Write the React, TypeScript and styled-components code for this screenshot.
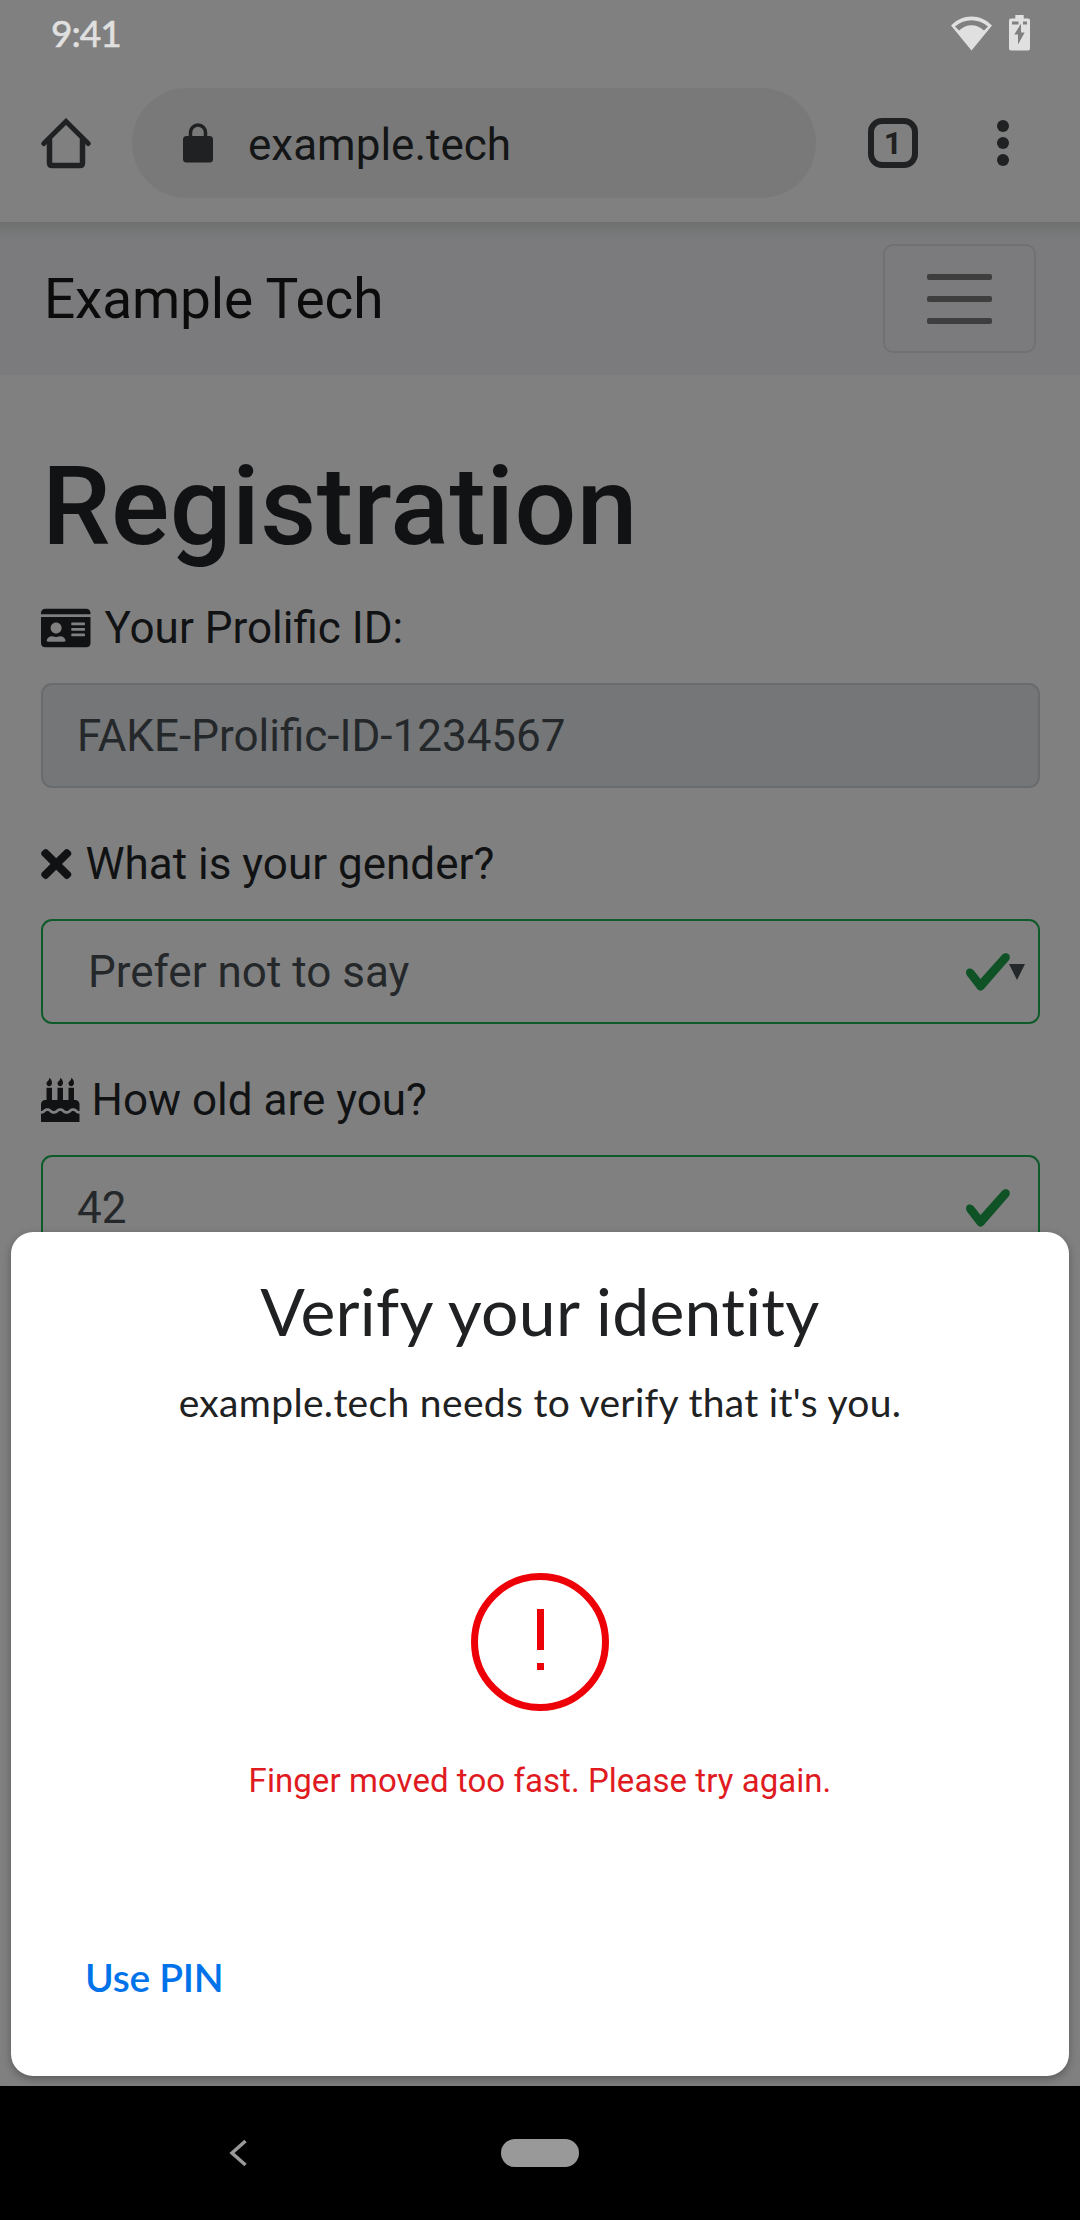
import React from "react";
import styled, { createGlobalStyle } from "styled-components";
import { FaIdCard, FaTimes, FaBirthdayCake } from "react-icons/fa";

const roboto = `Roboto, "Liberation Sans", sans-serif`;
const display = `Lato, "Open Sans", sans-serif`;

const GlobalStyle = createGlobalStyle`
  *, *::before, *::after { box-sizing: border-box; }
  html, body { margin: 0; background: #808080; }
  h1, h2, p { margin: 0; font-weight: 400; }
  button { font: inherit; margin: 0; padding: 0; border: 0; background: none; color: inherit; }
  svg { display: block; flex: none; }
`;

const Screen = styled.div`
  position: relative;
  width: 1080px;
  height: 2220px;
  display: flex;
  flex-direction: column;
  overflow: hidden;
  background: #808080;
  font-family: ${roboto};
  color: #111213;
`;

const StatusBar = styled.div`
  display: flex;
  justify-content: space-between;
  align-items: center;
  height: 64px;
  padding: 2px 50px 0 51px;
  color: #e0e0e0;
`;

const Clock = styled.span`
  font-family: ${display};
  font-size: 37px;
  line-height: 44px;
  letter-spacing: -1px;
  -webkit-text-stroke: 0.6px currentColor;
  white-space: nowrap;
`;

const StatusIcons = styled.div`
  display: flex;
  align-items: center;
  gap: 17px;
`;

const BrowserBar = styled.header`
  display: flex;
  align-items: center;
  height: 158px;
  padding: 0 71px 0 41px;
  color: #1f2122;
`;

const AddressBar = styled.div`
  display: flex;
  align-items: center;
  width: 684px;
  height: 110px;
  margin: 0 52px 0 41px;
  padding-left: 51px;
  border-radius: 55px;
  background: #797979;
`;

const Address = styled.span`
  margin-left: 35px;
  padding-top: 3px;
  font-size: 44px;
  line-height: 52px;
  color: #141516;
  white-space: nowrap;
`;

const TabCount = styled.div`
  display: flex;
  align-items: center;
  justify-content: center;
  width: 50px;
  height: 50px;
  margin-right: 79px;
  border: 6px solid #1f2122;
  border-radius: 14px;
  font-size: 32px;
  line-height: 38px;
  font-weight: 700;
`;

const Dots = styled.button`
  display: flex;
  flex-direction: column;
  gap: 5px;
`;

const Dot = styled.span`
  width: 12px;
  height: 12px;
  border-radius: 50%;
  background: #1f2122;
`;

const SiteNav = styled.nav`
  display: flex;
  align-items: center;
  justify-content: space-between;
  height: 153px;
  padding: 0 44px;
  background: linear-gradient(#6e7070 0, #737575 6px, #757777 10px, #7b7b7d 16px);
`;

const Brand = styled.span`
  font-size: 55px;
  line-height: 66px;
  letter-spacing: -0.15px;
  color: #0b0b0b;
  white-space: nowrap;
`;

const Toggler = styled.button`
  display: flex;
  flex-direction: column;
  align-items: center;
  justify-content: center;
  gap: 16px;
  width: 153px;
  height: 109px;
  border: 2px solid #717173;
  border-radius: 10px;
`;

const TogglerLine = styled.span`
  width: 65px;
  height: 6px;
  border-radius: 2px;
  background: #3e3e3f;
`;

const Page = styled.main`
  flex: 1;
  padding: 66px 40px 0 41px;
`;

const Heading = styled.h1`
  margin: 0 0 22px 1px;
  font-size: 109px;
  line-height: 132px;
  font-weight: 500;
  letter-spacing: 0.4px;
  white-space: nowrap;
`;

const Field = styled.div`
  margin-bottom: 43px;
`;

const FieldLabel = styled.label<{ $iconWidth: number; $gap: number }>`
  display: flex;
  align-items: center;
  gap: ${(p) => p.$gap}px;
  margin-bottom: 22px;
  height: 66px;
  font-size: 44px;
  line-height: 66px;
  white-space: nowrap;

  svg {
    width: ${(p) => p.$iconWidth}px;
    height: 44px;
  }
`;

const Control = styled.div<{ $border: string; $fill?: string; $indent?: number }>`
  display: flex;
  align-items: center;
  height: 105px;
  padding: 0 10px 0 ${(p) => p.$indent ?? 34}px;
  border: 2px solid ${(p) => p.$border};
  border-radius: 11px;
  background: ${(p) => p.$fill ?? "transparent"};
  color: #25282b;
  font-size: 44px;
  line-height: 52px;
  white-space: nowrap;
`;

const Trailing = styled.div<{ $end: number }>`
  display: flex;
  align-items: center;
  margin-left: auto;
  margin-right: ${(p) => p.$end}px;
`;

const Sheet = styled.section`
  position: absolute;
  left: 11px;
  right: 11px;
  top: 1232px;
  height: 844px;
  display: flex;
  flex-direction: column;
  align-items: center;
  padding-top: 40px;
  border-radius: 22px;
  background: #fff;
  box-shadow: 0 3px 8px rgba(0, 0, 0, 0.3);
  color: #202122;
`;

const Title = styled.h2`
  font-family: ${display};
  font-size: 66px;
  line-height: 78px;
  letter-spacing: 0.3px;
  font-variant-ligatures: none;
  white-space: nowrap;
`;

const Subtitle = styled.p`
  margin-top: 26px;
  font-family: ${display};
  font-size: 39px;
  line-height: 52px;
  letter-spacing: 0.33px;
  font-variant-ligatures: none;
  white-space: nowrap;
`;

const ErrorRing = styled.div`
  display: flex;
  flex-direction: column;
  align-items: center;
  justify-content: center;
  gap: 13px;
  width: 138px;
  height: 138px;
  margin-top: 145px;
  padding-bottom: 6px;
  border: 7px solid #ee0008;
  border-radius: 50%;
`;

const Mark = styled.span<{ $height: number }>`
  width: 7px;
  height: ${(p) => p.$height}px;
  background: #ee0008;
`;

const ErrorText = styled.p`
  margin-top: 50px;
  font-size: 33px;
  line-height: 40px;
  letter-spacing: 0.06px;
  color: #e01b1f;
  white-space: nowrap;
`;

const PinButton = styled.button`
  align-self: flex-start;
  margin: 151px 0 0 74px;
  font-family: ${display};
  font-size: 39px;
  line-height: 50px;
  font-weight: 600;
  letter-spacing: -0.3px;
  color: #0073ea;
  white-space: nowrap;
`;

const SystemNav = styled.footer`
  display: grid;
  grid-template-columns: 1fr 78px 1fr;
  align-items: center;
  height: 134px;
  background: #000;
`;

const Back = styled.button`
  justify-self: start;
  margin-left: 229px;
`;

const HomePill = styled.button`
  width: 78px;
  height: 28px;
  border-radius: 14px;
  background: #999;
`;

const WifiIcon = () => (
  <svg width="41" height="35" viewBox="0 0 41 35">
    <path
      fillRule="evenodd"
      fill="#e0e0e0"
      d="M20.500 34.500 0 9.500C6 3.500 13 .5 20.500.5S35 3.500 41 9.500ZM4 10.500 8 14.500C12 11 16 9.300 20.500 9.300S29 11 33 14.500L37 10.500C32 6.300 26.500 4.200 20.500 4.200S9 6.300 4 10.500Z"
    />
  </svg>
);

const BatteryIcon = () => (
  <svg width="21" height="36" viewBox="0 0 21 36">
    <path
      fillRule="evenodd"
      fill="#e0e0e0"
      d="M6.300 0h8.400v3.500h4.300a2 2 0 0 1 2 2V33.500a2 2 0 0 1-2 2H2a2 2 0 0 1-2-2V5.500a2 2 0 0 1 2-2h4.300ZM3 6.500v3h6.500v-3ZM14 6.500v3h4v-3ZM12 8.500 5.300 19.500H9V29.500L15.700 17.500H12Z"
    />
  </svg>
);

const HomeIcon = () => (
  <svg width="50" height="51" viewBox="0 0 50 51" fill="none" stroke="#1f2122">
    <path d="M2.800 25.500 25 3.500l22.200 22" strokeWidth="5" strokeLinecap="round" strokeLinejoin="miter" />
    <path d="M8.500 21v24q0 2.500 2.500 2.500h28q2.500 0 2.500-2.500V21" strokeWidth="5.500" />
  </svg>
);

const LockIcon = () => (
  <svg width="30" height="40" viewBox="0 0 30 40">
    <rect y="13" width="30" height="26.500" rx="3.500" fill="#1f2122" />
    <path d="M7.500 14V9.500a7.500 7.500 0 0 1 15 0V14" fill="none" stroke="#1f2122" strokeWidth="3.500" />
  </svg>
);

const CheckIcon = () => (
  <svg width="50" height="50" viewBox="0 0 8 8">
    <path
      fill="#0e5226"
      d="M2.300 6.730L.6 4.530c-.4-1.040.46-1.400 1.100-.8l1.100 1.400 3.400-3.800c.6-.63 1.600-.27 1.200.7l-4 4.600c-.43.5-.8.4-1.100.1z"
    />
  </svg>
);

const CaretIcon = () => (
  <svg width="16" height="16" viewBox="0 0 16 16">
    <path d="M0 0h16L8 16Z" fill="#25282b" />
  </svg>
);

const SelectCheck = styled.span`
  margin-right: -4px;
`;

const BackIcon = () => (
  <svg width="19" height="28" viewBox="0 0 19 28">
    <path d="M16.500 2 3 14l13.500 12" fill="none" stroke="#999" strokeWidth="3.500" />
  </svg>
);

export default function App() {
  return (
    <Screen>
      <GlobalStyle />
      <StatusBar>
        <Clock>9:41</Clock>
        <StatusIcons>
          <WifiIcon />
          <BatteryIcon />
        </StatusIcons>
      </StatusBar>
      <BrowserBar>
        <HomeIcon />
        <AddressBar>
          <LockIcon />
          <Address>example.tech</Address>
        </AddressBar>
        <TabCount>1</TabCount>
        <Dots aria-label="More">
          <Dot />
          <Dot />
          <Dot />
        </Dots>
      </BrowserBar>
      <SiteNav>
        <Brand>Example Tech</Brand>
        <Toggler aria-label="Menu">
          <TogglerLine />
          <TogglerLine />
          <TogglerLine />
        </Toggler>
      </SiteNav>
      <Page>
        <Heading>Registration</Heading>
        <Field>
          <FieldLabel $iconWidth={49.5} $gap={14}>
            <FaIdCard />
            Your Prolific ID:
          </FieldLabel>
          <Control $border="#696c6e" $fill="#747678">
            FAKE-Prolific-ID-1234567
          </Control>
        </Field>
        <Field>
          <FieldLabel $iconWidth={30.5} $gap={14}>
            <FaTimes />
            What is your gender?
          </FieldLabel>
          <Control $border="#0e5a2a" $indent={45}>
            Prefer not to say
            <Trailing $end={3}>
              <SelectCheck>
                <CheckIcon />
              </SelectCheck>
              <CaretIcon />
            </Trailing>
          </Control>
        </Field>
        <Field>
          <FieldLabel $iconWidth={38.5} $gap={12}>
            <FaBirthdayCake />
            How old are you?
          </FieldLabel>
          <Control $border="#0e5a2a">
            42
            <Trailing $end={15}>
              <CheckIcon />
            </Trailing>
          </Control>
        </Field>
      </Page>
      <Sheet>
        <Title>Verify your identity</Title>
        <Subtitle>example.tech needs to verify that it's you.</Subtitle>
        <ErrorRing>
          <Mark $height={41} />
          <Mark $height={7} />
        </ErrorRing>
        <ErrorText>Finger moved too fast. Please try again.</ErrorText>
        <PinButton>Use PIN</PinButton>
      </Sheet>
      <SystemNav>
        <Back aria-label="Back">
          <BackIcon />
        </Back>
        <HomePill aria-label="Home" />
      </SystemNav>
    </Screen>
  );
}
